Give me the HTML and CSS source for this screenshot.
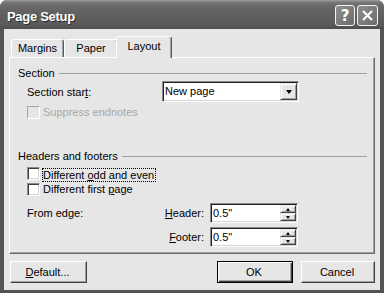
FILE: index.html
```html
<!DOCTYPE html>
<html lang="en">
<head>
    <meta charset="UTF-8">
    <title>Page Setup</title>
    <link rel="stylesheet" href="styles.css">
</head>
<body>
    <div class="window">
        <div class="titlebar">
            <span class="title">Page Setup</span>
            <div class="caption-buttons">
                <span class="cap-btn help">?</span>
                <span class="cap-btn close">
                    <svg width="11" height="11" viewBox="0 0 11 11">
                        <path d="M1 1 L10 10 M10 1 L1 10" stroke="#fff" stroke-width="2.2" fill="none"/>
                    </svg>
                </span>
            </div>
        </div>

        <div class="client">
            <div class="tabs">
                <div class="tab tab-margins">Margins</div>
                <div class="tab tab-paper">Paper</div>
                <div class="tab active">Layout</div>
            </div>

            <div class="panel">
                <div class="group-title">Section</div>

                <div class="field-row section-start">
                    <span class="col1">Section star<u>t</u>:</span>
                    <div class="combo">
                        <span class="combo-text">New page</span>
                        <span class="drop-btn"><span class="arrow-down big"></span></span>
                    </div>
                </div>

                <div class="check disabled suppress">
                    <span class="box"></span>
                    <span>Suppress endnotes</span>
                </div>

                <div class="group-title headers">Headers and footers</div>

                <div class="check odd-even">
                    <span class="box"></span>
                    <span class="focus">Different <u>o</u>dd and even</span>
                </div>
                <div class="check">
                    <span class="box"></span>
                    <span>Different first <u>p</u>age</span>
                </div>

                <div class="field-row spin-row">
                    <span class="col1">From edge:</span>
                    <span class="spin-label"><u>H</u>eader:</span>
                    <div class="spin">
                        <span class="spin-text">0.5"</span>
                        <span class="spin-btns">
                            <span class="sb"><span class="arrow-up"></span></span>
                            <span class="sb"><span class="arrow-down"></span></span>
                        </span>
                    </div>
                </div>

                <div class="field-row spin-row">
                    <span class="col1"></span>
                    <span class="spin-label"><u>F</u>ooter:</span>
                    <div class="spin">
                        <span class="spin-text">0.5"</span>
                        <span class="spin-btns">
                            <span class="sb"><span class="arrow-up"></span></span>
                            <span class="sb"><span class="arrow-down"></span></span>
                        </span>
                    </div>
                </div>
            </div>

            <div class="actions">
                <div class="btn btn-default"><u>D</u>efault...</div>
                <div class="btn btn-ok">OK</div>
                <div class="btn btn-cancel">Cancel</div>
            </div>
        </div>
    </div>
</body>
</html>
```

FILE: styles.css
```css
* {
    box-sizing: border-box;
}

body {
    margin: 0;
    background: #fff;
    font-family: "Liberation Sans", Arial, sans-serif;
    font-size: 11px;
    color: #000;
}

.window {
    width: 384px;
    height: 293px;
    display: flex;
    flex-direction: column;
    background: #545454;
    border-radius: 7px 7px 0 0;
    overflow: hidden;
}

/* title bar */
.titlebar {
    height: 29px;
    flex: none;
    display: flex;
    align-items: flex-start;
    justify-content: space-between;
    padding: 0 6px 0 7px;
    background: linear-gradient(#a0a0a0 0, #7a7a7a 2px, #686868 6px, #606060 50%, #5a5a5a 85%, #4e4e4e 100%);
}

.title {
    margin-top: 9px;
    line-height: 16px;
    font-size: 13px;
    font-weight: bold;
    color: #fff;
    letter-spacing: -0.3px;
    text-shadow: 1px 1px 0 #2c2c2c;
}

.caption-buttons {
    display: flex;
    gap: 2px;
    margin-top: 5px;
}

.cap-btn {
    width: 21px;
    height: 21px;
    border: 1px solid #f4f4f4;
    border-radius: 3px;
    background: linear-gradient(135deg, #8e8e8e, #6c6c6c);
    display: flex;
    align-items: center;
    justify-content: center;
    color: #fff;
    font: bold 15px "DejaVu Sans", sans-serif;
}

.cap-btn.help {
    width: 20px;
}

/* client area */
.client {
    flex: 1;
    margin: 0 4px 3px;
    background: #e6e6e6;
    padding: 0 5px 7px;
    display: flex;
    flex-direction: column;
}

.tabs {
    height: 28px;
    flex: none;
    display: flex;
    align-items: flex-end;
    padding-left: 2px;
}

.tab {
    height: 18px;
    text-align: center;
    line-height: 16px;
    background: #e6e6e6;
    border-top: 1px solid #fff;
    border-left: 1px solid #fff;
    border-right: 1px solid #5a5a5a;
    border-radius: 3px 3px 0 0;
    box-shadow: inset -1px 0 #a0a0a0;
}

.tab-margins {
    width: 53px;
}

.tab-paper {
    width: 54px;
}

.tab.active {
    width: 56px;
    height: 22px;
    margin: 0 -2px -1px;
    line-height: 18px;
    position: relative;
    z-index: 1;
}

.panel {
    height: 197px;
    flex: none;
    border-top: 1px solid #fff;
    border-left: 1px solid #fff;
    border-right: 1px solid #6a6a6a;
    border-bottom: 1px solid #6a6a6a;
    box-shadow: inset -1px -1px #a0a0a0;
    padding: 8px 7px 0 8px;
}

.group-title {
    display: flex;
    align-items: center;
    gap: 4px;
    height: 14px;
    line-height: 14px;
}

.group-title::after {
    content: "";
    flex: 1;
    border-top: 1px solid #a0a0a0;
}

.group-title.headers {
    margin-top: 27px;
}

.field-row {
    display: flex;
    align-items: center;
    margin-left: 9px;
}

.section-start {
    margin-top: 1px;
    height: 21px;
}

.col1 {
    width: 135px;
    flex: none;
}

/* combo box */
.combo {
    width: 137px;
    height: 21px;
    display: flex;
    padding: 1px;
    background: #fff;
    border: 1px solid;
    border-color: #8a8a8a #fff #fff #8a8a8a;
    box-shadow: inset 1px 1px #202020, inset -1px -1px #d4d4d4;
}

.combo-text {
    flex: 1;
    padding-left: 1px;
    line-height: 17px;
}

.drop-btn,
.sb {
    display: flex;
    align-items: center;
    justify-content: center;
    background: #e6e6e6;
    border: 1px solid;
    border-color: #e6e6e6 #404040 #404040 #e6e6e6;
    box-shadow: inset 1px 1px #fff, inset -1px -1px #a0a0a0;
}

.drop-btn {
    width: 17px;
}

.arrow-down {
    width: 1px;
    height: 0;
    border-top: 3px solid #000;
    border-left: 2px solid transparent;
    border-right: 2px solid transparent;
}

.arrow-down.big {
    border-top-width: 4px;
    border-left-width: 3px;
    border-right-width: 3px;
}

.arrow-up {
    width: 1px;
    height: 0;
    border-bottom: 3px solid #000;
    border-left: 2px solid transparent;
    border-right: 2px solid transparent;
}

/* check boxes */
.check {
    display: flex;
    align-items: flex-start;
    gap: 3px;
    height: 16px;
    margin-left: 9px;
    line-height: 13px;
}

.check .box {
    width: 13px;
    height: 13px;
    flex: none;
    background: #fff;
    border: 1px solid;
    border-color: #8a8a8a #fff #fff #8a8a8a;
    box-shadow: inset 1px 1px #404040, inset -1px -1px #d4d4d4;
}

.suppress {
    margin-top: 4px;
}

.check.disabled {
    color: #a6a6a6;
}

.check.disabled .box {
    background: #e6e6e6;
    border-color: #a6a6a6 #fff #fff #a6a6a6;
    box-shadow: none;
}

.odd-even {
    margin-top: 4px;
}

.focus {
    margin-left: -1px;
    border: 1px dotted #000;
    line-height: 12px;
    padding: 0 1px 0 0;
    margin-top: 1px;
}

/* spin boxes */
.spin-row {
    margin-top: 4px;
    height: 20px;
}

.spin-label {
    width: 42px;
    margin-right: 6px;
    text-align: right;
}

.spin {
    width: 88px;
    height: 20px;
    display: flex;
    padding: 1px;
    background: #fff;
    border: 1px solid;
    border-color: #8a8a8a #fff #fff #8a8a8a;
    box-shadow: inset 1px 1px #202020, inset -1px -1px #d4d4d4;
}

.spin-text {
    flex: 1;
    padding-left: 1px;
    line-height: 16px;
}

.spin-btns {
    width: 16px;
    display: flex;
    flex-direction: column;
}

.sb {
    flex: 1;
}

/* dialog buttons */
.actions {
    margin-top: 7px;
    display: flex;
    height: 22px;
}

.btn {
    height: 22px;
    display: flex;
    align-items: center;
    justify-content: center;
    padding-right: 2px;
    background: #e6e6e6;
    border: 1px solid;
    border-color: #fff #404040 #404040 #fff;
    box-shadow: inset -1px -1px #a0a0a0;
}

.btn-default {
    width: 77px;
    margin-left: 1px;
}

.btn-ok {
    width: 76px;
    margin-left: auto;
    border-color: #000;
    box-shadow: inset 1px 1px #fff, inset -1px -1px #404040, inset -2px -2px #a0a0a0;
}

.btn-cancel {
    width: 74px;
    margin-left: 8px;
}
```
